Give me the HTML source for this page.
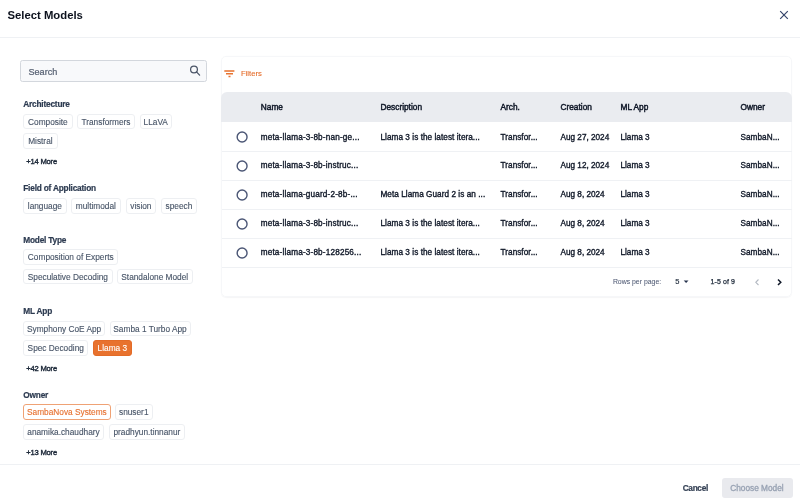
<!DOCTYPE html>
<html><head><meta charset="utf-8">
<style>
*{box-sizing:border-box;margin:0;padding:0}
html,body{width:800px;height:504px;overflow:hidden;background:#fff}
body{position:relative;font-family:"Liberation Sans",sans-serif;color:#101828}
.wrap{position:absolute;left:0;top:0;width:800px;height:504px;will-change:transform}
.a{position:absolute;white-space:nowrap}
.t{position:absolute;white-space:nowrap;line-height:10px;height:10px}
.hr{position:absolute;left:0;width:800px;height:1px;background:#eff1f4}
.sec{font-weight:700;font-size:8.3px;letter-spacing:-0.2px;color:#2c3a50;margin-top:0.3px;-webkit-text-stroke:0.2px #2c3a50}
.chip{position:absolute;height:15.5px;border:1px solid #edeff2;border-radius:3px;font-size:8.3px;line-height:14px;color:#475467;-webkit-text-stroke:0.12px currentColor;text-align:center;white-space:nowrap;background:#fff}
.chip.on{background:#e8722e;border-color:#e36b27;color:#fff}
.chip.ol{border-color:#efa275;color:#e6702f}
.more{font-weight:400;font-size:7.6px;letter-spacing:-0.19px;color:#1d2939;-webkit-text-stroke:0.4px #1d2939;margin-top:-0.4px}
.th{font-size:8.3px;color:#101828;-webkit-text-stroke:0.45px #101828}
.td{font-size:8.2px;color:#101828;-webkit-text-stroke:0.35px #101828;line-height:10px;letter-spacing:0.05px}
.nm{letter-spacing:0.17px}
.dt{letter-spacing:0px}
.ar{letter-spacing:0.05px}
.ml{letter-spacing:0px}
.radio{position:absolute;left:236px;width:12px;height:12px}
.rowline{position:absolute;left:222px;width:570px;height:1px;background:#eff1f4}
</style></head><body><div class="wrap">
<!-- header -->
<div class="t" style="left:7.5px;top:8.9px;font-size:11.3px;font-weight:700;line-height:12px;height:12px;color:#0c111d">Select Models</div>
<svg class="a" style="left:778px;top:9px" width="12" height="12" viewBox="0 0 12 12"><path d="M2.2 2.2L9.8 9.8M9.8 2.2L2.2 9.8" stroke="#34446a" stroke-width="1.2" fill="none"/></svg>
<div class="hr" style="top:37px"></div>

<!-- search -->
<div class="a" style="left:20px;top:59.5px;width:187px;height:22.5px;background:#f8f9fb;border:1.2px solid #d3d7dd;border-radius:2.5px"></div>
<div class="t" style="left:28.5px;top:66.5px;font-size:9.1px;color:#566072;-webkit-text-stroke:0.2px #566072">Search</div>
<svg class="a" style="left:188px;top:63px" width="14" height="14" viewBox="0 0 14 14"><circle cx="6.0" cy="6.4" r="3.4" stroke="#4b5567" stroke-width="1.25" fill="none"/><path d="M8.5 8.9L11.6 12.1" stroke="#4b5567" stroke-width="1.3" stroke-linecap="round"/></svg>

<!-- Architecture -->
<div class="t sec" style="left:23.25px;top:99px">Architecture</div>
<div class="chip" style="left:23.25px;top:113.5px;width:49.25px">Composite</div>
<div class="chip" style="left:77px;top:113.5px;width:58px">Transformers</div>
<div class="chip" style="left:139.5px;top:113.5px;width:32.5px">LLaVA</div>
<div class="chip" style="left:23.25px;top:133px;width:34.25px">Mistral</div>
<div class="t more" style="left:26.2px;top:157px">+14 More</div>

<!-- Field -->
<div class="t sec" style="left:23.25px;top:183px">Field of Application</div>
<div class="chip" style="left:23.25px;top:198px;width:43.25px">language</div>
<div class="chip" style="left:71.25px;top:198px;width:49.25px">multimodal</div>
<div class="chip" style="left:125.5px;top:198px;width:30.75px">vision</div>
<div class="chip" style="left:161px;top:198px;width:36px">speech</div>

<!-- Model Type -->
<div class="t sec" style="left:23.25px;top:235px">Model Type</div>
<div class="chip" style="left:23.25px;top:249.25px;width:95px">Composition of Experts</div>
<div class="chip" style="left:23.25px;top:268.75px;width:89.25px">Speculative Decoding</div>
<div class="chip" style="left:117px;top:268.75px;width:75.5px">Standalone Model</div>

<!-- ML App -->
<div class="t sec" style="left:23.25px;top:306px">ML App</div>
<div class="chip" style="left:23.25px;top:320.5px;width:81.75px">Symphony CoE App</div>
<div class="chip" style="left:109.5px;top:320.5px;width:81px">Samba 1 Turbo App</div>
<div class="chip" style="left:23.25px;top:340px;width:65px">Spec Decoding</div>
<div class="chip on" style="left:93.25px;top:340px;width:38.25px">Llama 3</div>
<div class="t more" style="left:26.2px;top:364px">+42 More</div>

<!-- Owner -->
<div class="t sec" style="left:23.25px;top:390px">Owner</div>
<div class="chip ol" style="left:23.25px;top:404.25px;width:87.25px">SambaNova Systems</div>
<div class="chip" style="left:115px;top:404.25px;width:37.5px">snuser1</div>
<div class="chip" style="left:23.25px;top:424.25px;width:80.5px">anamika.chaudhary</div>
<div class="chip" style="left:108.75px;top:424.25px;width:76.25px">pradhyun.tinnanur</div>
<div class="t more" style="left:26.2px;top:448px">+13 More</div>

<!-- card -->
<div class="a" style="left:221px;top:55.5px;width:571px;height:241px;border:1px solid #f6f7f9;border-radius:5px;box-shadow:0 0.5px 1px rgba(16,24,40,0.04)"></div>
<svg class="a" style="left:222px;top:68px" width="14" height="11" viewBox="0 0 14 11"><path d="M2.3 3H12.4M4 5.7H11M6.5 8.4H8.5" stroke="#e8722e" stroke-width="1.5" fill="none"/></svg>
<div class="t" style="left:240.9px;top:69px;font-size:7.7px;color:#e46c2a;-webkit-text-stroke:0.1px #e46c2a">Filters</div>

<div class="a" style="left:221px;top:92px;width:571px;height:30px;background:#eaecf0;border-radius:6px 6px 0 0"></div>
<div class="t th" style="left:260.8px;top:102px">Name</div>
<div class="t th" style="left:380.5px;top:102px">Description</div>
<div class="t th" style="left:500.5px;top:102px">Arch.</div>
<div class="t th" style="left:560.5px;top:102px">Creation</div>
<div class="t th" style="left:620.5px;top:102px">ML App</div>
<div class="t th" style="left:740.5px;top:102px">Owner</div>

<!-- rows -->
<svg class="radio" style="top:131.0px" viewBox="0 0 12 12"><circle cx="6.1" cy="6" r="4.95" stroke="#4b5675" stroke-width="1.4" fill="none"/></svg>
<div class="t td nm" style="left:260.7px;top:132.5px">meta-llama-3-8b-nan-ge...</div>
<div class="t td" style="left:380.5px;top:132.5px">Llama 3 is the latest itera...</div>
<div class="t td ar" style="left:500.5px;top:132.5px">Transfor...</div>
<div class="t td dt" style="left:560.5px;top:132.5px">Aug 27, 2024</div>
<div class="t td ml" style="left:620.5px;top:132.5px">Llama 3</div>
<div class="t td" style="left:740.5px;top:132.5px">SambaN...</div>
<div class="rowline" style="top:151px"></div>

<svg class="radio" style="top:159.9px" viewBox="0 0 12 12"><circle cx="6.1" cy="6" r="4.95" stroke="#4b5675" stroke-width="1.4" fill="none"/></svg>
<div class="t td nm" style="left:260.7px;top:161.25px">meta-llama-3-8b-instruc...</div>
<div class="t td ar" style="left:500.5px;top:161.25px">Transfor...</div>
<div class="t td dt" style="left:560.5px;top:161.25px">Aug 12, 2024</div>
<div class="t td ml" style="left:620.5px;top:161.25px">Llama 3</div>
<div class="t td" style="left:740.5px;top:161.25px">SambaN...</div>
<div class="rowline" style="top:180px"></div>

<svg class="radio" style="top:188.8px" viewBox="0 0 12 12"><circle cx="6.1" cy="6" r="4.95" stroke="#4b5675" stroke-width="1.4" fill="none"/></svg>
<div class="t td nm" style="left:260.7px;top:190px">meta-llama-guard-2-8b-...</div>
<div class="t td" style="left:380.5px;top:190px">Meta Llama Guard 2 is an ...</div>
<div class="t td ar" style="left:500.5px;top:190px">Transfor...</div>
<div class="t td dt" style="left:560.5px;top:190px">Aug 8, 2024</div>
<div class="t td ml" style="left:620.5px;top:190px">Llama 3</div>
<div class="t td" style="left:740.5px;top:190px">SambaN...</div>
<div class="rowline" style="top:209px"></div>

<svg class="radio" style="top:217.7px" viewBox="0 0 12 12"><circle cx="6.1" cy="6" r="4.95" stroke="#4b5675" stroke-width="1.4" fill="none"/></svg>
<div class="t td nm" style="left:260.7px;top:218.75px">meta-llama-3-8b-instruc...</div>
<div class="t td" style="left:380.5px;top:218.75px">Llama 3 is the latest itera...</div>
<div class="t td ar" style="left:500.5px;top:218.75px">Transfor...</div>
<div class="t td dt" style="left:560.5px;top:218.75px">Aug 8, 2024</div>
<div class="t td ml" style="left:620.5px;top:218.75px">Llama 3</div>
<div class="t td" style="left:740.5px;top:218.75px">SambaN...</div>
<div class="rowline" style="top:238px"></div>

<svg class="radio" style="top:246.6px" viewBox="0 0 12 12"><circle cx="6.1" cy="6" r="4.95" stroke="#4b5675" stroke-width="1.4" fill="none"/></svg>
<div class="t td nm" style="left:260.7px;top:247.5px">meta-llama-3-8b-128256...</div>
<div class="t td" style="left:380.5px;top:247.5px">Llama 3 is the latest itera...</div>
<div class="t td ar" style="left:500.5px;top:247.5px">Transfor...</div>
<div class="t td dt" style="left:560.5px;top:247.5px">Aug 8, 2024</div>
<div class="t td ml" style="left:620.5px;top:247.5px">Llama 3</div>
<div class="t td" style="left:740.5px;top:247.5px">SambaN...</div>
<div class="rowline" style="top:267px"></div>

<!-- pagination -->
<div class="t" style="left:612.9px;top:277px;font-size:6.9px;color:#4f5a74;-webkit-text-stroke:0.05px #4f5a74">Rows per page:</div>
<div class="t" style="left:675.2px;top:277px;font-size:7.5px;color:#1d2939;-webkit-text-stroke:0.15px #1d2939">5</div>
<svg class="a" style="left:682px;top:279px" width="8" height="6" viewBox="0 0 8 6"><path d="M1.7 1.6H6.5L4.1 4.1Z" fill="#26334d"/></svg>
<div class="t" style="left:710.6px;top:277px;font-size:7px;letter-spacing:0.08px;color:#1d2939;-webkit-text-stroke:0.25px #1d2939">1-5 of 9</div>
<svg class="a" style="left:752px;top:277px" width="10" height="10" viewBox="0 0 10 10"><path d="M6.5 2.5L3.8 5.3L6.5 8" stroke="#b3b9c2" stroke-width="1.1" fill="none"/></svg>
<svg class="a" style="left:774px;top:277px" width="10" height="10" viewBox="0 0 10 10"><path d="M4 2.5L6.8 5.3L4 8" stroke="#101828" stroke-width="1.5" fill="none"/></svg>

<!-- footer -->
<div class="hr" style="top:463.5px"></div>
<div class="t" style="left:682.7px;top:483px;font-size:8.3px;font-weight:700;letter-spacing:-0.33px;color:#344054;-webkit-text-stroke:0.2px #344054">Cancel</div>
<div class="a" style="left:722px;top:478px;width:70.5px;height:19.5px;background:#e9eaee;border-radius:3px"></div>
<div class="t" style="left:730.2px;top:483px;font-size:8.3px;color:#98a2b3;-webkit-text-stroke:0.3px #98a2b3">Choose Model</div>
</div></body></html>
